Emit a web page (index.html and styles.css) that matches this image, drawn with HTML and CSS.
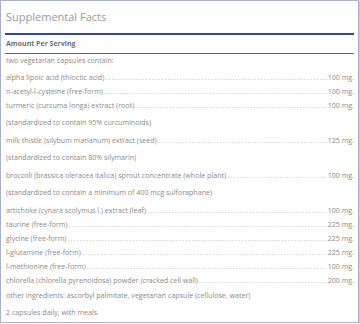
FILE: index.html
```html
<!DOCTYPE html>
<html>
<head>
<meta charset="utf-8">
<link rel="stylesheet" href="styles.css">
</head>
<body>
<div class="facts">
  <h2 class="title">Supplemental Facts</h2>
  <div class="head">Amount Per Serving</div>
  <div class="list">
    <p class="note first">two vegetarian capsules contain:</p>
    <div class="item"><span class="name">alpha lipoic acid (thioctic acid)</span><span class="dots"></span><span class="amt">100 mg.</span></div>
    <div class="item"><span class="name">n-acetyl-l-cysteine (free-form)</span><span class="dots"></span><span class="amt">100 mg.</span></div>
    <div class="item"><span class="name">turmeric (curcuma longa) extract (root)</span><span class="dots"></span><span class="amt">100 mg.</span></div>
    <p class="note">(standardized to contain 95% curcuminoids)</p>
    <div class="item"><span class="name">milk thistle (silybum marianum) extract (seed)</span><span class="dots"></span><span class="amt">125 mg.</span></div>
    <p class="note">(standardized to contain 80% silymarin)</p>
    <div class="item"><span class="name">broccoli (brassica oleracea italica) sprout concentrate (whole plant)</span><span class="dots"></span><span class="amt">100 mg.</span></div>
    <p class="note">(standardized to contain a minimum of 400 mcg sulforaphane)</p>
    <div class="item"><span class="name">artichoke (cynara scolymus l.) extract (leaf)</span><span class="dots"></span><span class="amt">100 mg.</span></div>
    <div class="item"><span class="name">taurine (free-form)</span><span class="dots"></span><span class="amt">225 mg.</span></div>
    <div class="item"><span class="name">glycine (free-form)</span><span class="dots"></span><span class="amt">225 mg.</span></div>
    <div class="item"><span class="name">l-glutamine (free-form)</span><span class="dots"></span><span class="amt">225 mg.</span></div>
    <div class="item"><span class="name">l-methionine (free-form)</span><span class="dots"></span><span class="amt">100 mg.</span></div>
    <div class="item"><span class="name">chlorella (chlorella pyrenoidosa) powder (cracked cell wall)</span><span class="dots"></span><span class="amt">200 mg.</span></div>
    <p class="note other">other ingredients: ascorbyl palmitate, vegetarian capsule (cellulose, water)</p>
    <p class="note last">2 capsules daily, with meals.</p>
  </div>
</div>
</body>
</html>
```

FILE: styles.css
```css
html, body {
  margin: 0;
  padding: 0;
  background: #fff;
}
body {
  font-family: "Open Sans", "DejaVu Sans", sans-serif;
  color: #8a8a8a;
}
.facts {
  box-sizing: border-box;
  width: 359px;
  height: 323px;
  border: 1px solid #a8b0d6;
  box-shadow: 1px 1px 1px rgba(140, 150, 200, 0.5);
  padding: 0 4px 0 4px;
  overflow: hidden;
}
.title {
  margin: 0;
  padding: 7.5px 0 0 1px;
  font-size: 11px;
  line-height: 15px;
  font-weight: normal;
  color: #9a9a9a;
  border-bottom: 2px solid #2d4a9a;
  height: 24px;
}
.head {
  padding: 4px 0 4px 1px;
  font-size: 7px;
  line-height: 10px;
  font-weight: bold;
  color: #6e6e6e;
  border-bottom: 1px solid #4a64ad;
}
.list {
  padding-left: 1px;
  padding-top: 1px;
  font-size: 7.1px;
}
.note {
  margin: 3.5px 0;
  line-height: 14px;
}
.note.first {
  margin: 0 0 5px 0;
  line-height: 10px;
}
.note.other {
  margin-top: 1px;
  margin-bottom: 3px;
}
.note.last {
  margin-top: 0;
}
.item {
  display: flex;
  align-items: baseline;
  line-height: 14px;
  white-space: nowrap;
}
.name {
  flex: none;
}
.dots {
  flex: 1;
  overflow: hidden;
  margin: 0 1px;
  color: #aaa;
}
.dots::before {
  content: ". . . . . . . . . . . . . . . . . . . . . . . . . . . . . . . . . . . . . . . . . . . . . . . . . . . . . . . . . . . . . . . . . . . . . . . . . . . . . . . . . . . . . . . . . . . . . . . . . . . . . . . . . . .";
  letter-spacing: -0.3px;
}
.amt {
  flex: none;
}
```
